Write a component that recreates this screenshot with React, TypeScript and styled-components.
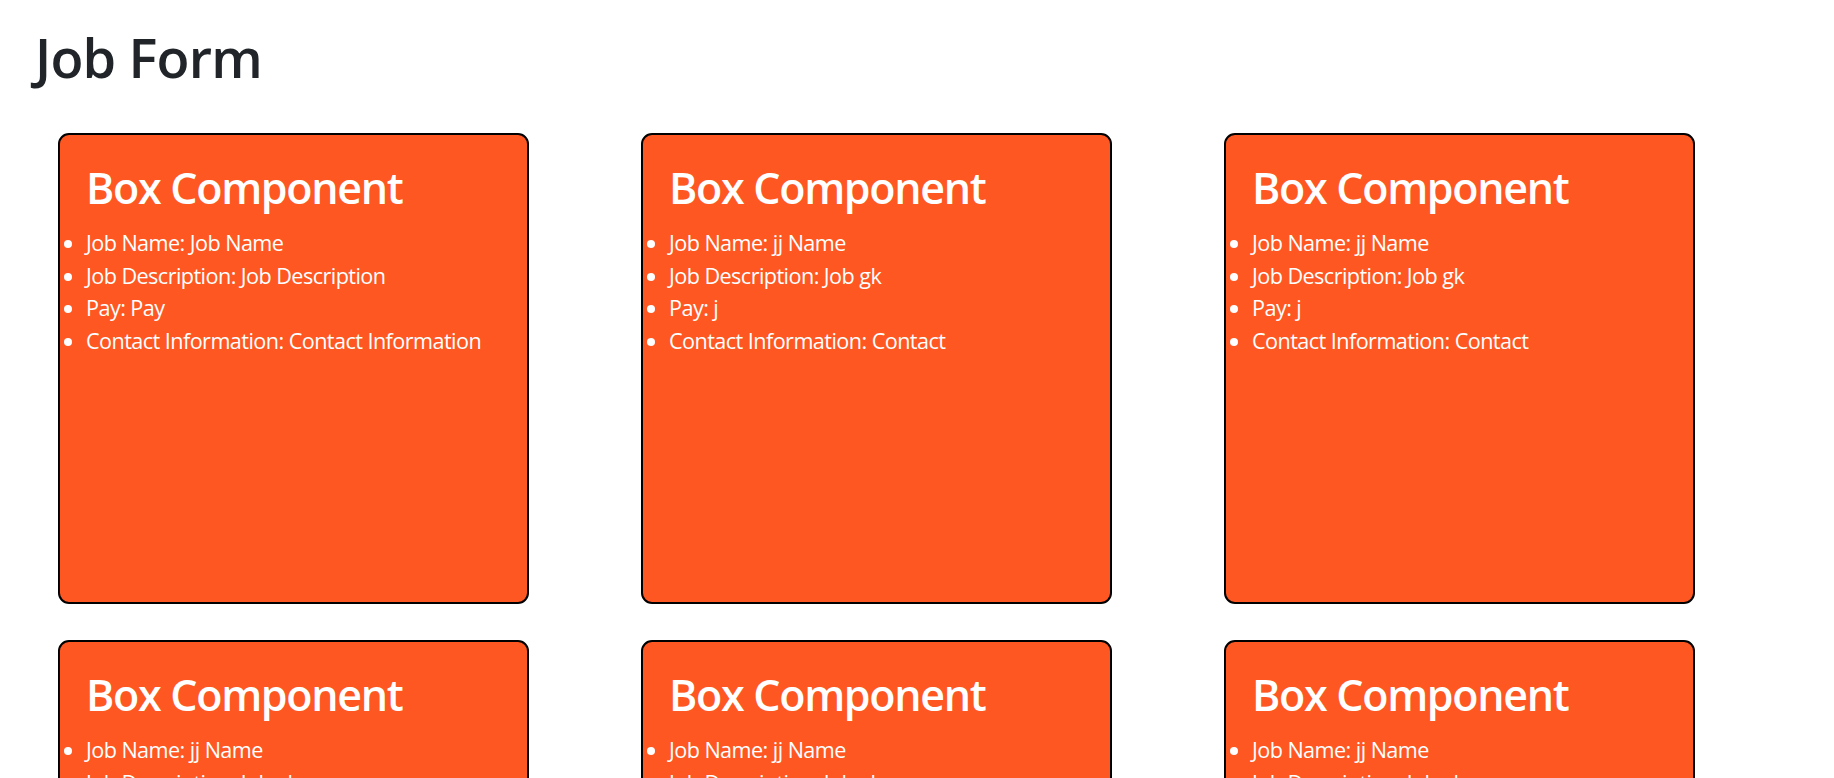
import React from "react";
import styled, { createGlobalStyle } from "styled-components";

const GlobalStyle = createGlobalStyle`
  body {
    margin: 0;
    background: #fff;
    font-family: "Open Sans", "Noto Sans", sans-serif;
    color: #212529;
  }
`;

type Job = {
  id: number;
  name: string;
  description: string;
  pay: string;
  contact: string;
};

const jobs: Job[] = [
  { id: 1, name: "Job Name", description: "Job Description", pay: "Pay", contact: "Contact Information" },
  { id: 2, name: "jj Name", description: "Job gk", pay: "j", contact: "Contact" },
  { id: 3, name: "jj Name", description: "Job gk", pay: "j", contact: "Contact" },
  { id: 4, name: "jj Name", description: "Job gk", pay: "j", contact: "Contact" },
  { id: 5, name: "jj Name", description: "Job gk", pay: "j", contact: "Contact" },
  { id: 6, name: "jj Name", description: "Job gk", pay: "j", contact: "Contact" },
];

const Page = styled.div`
  padding-top: 25px;
`;

const Title = styled.h1`
  margin: 0;
  padding-left: 35px;
  font-size: 54px;
  font-weight: 600;
  letter-spacing: -0.8px;
  line-height: 1.2;
  color: #212529;
`;

const Grid = styled.section`
  display: grid;
  grid-template-columns: repeat(3, 471px);
  column-gap: 112px;
  row-gap: 36px;
  margin-top: 43px;
  padding-left: 58px;
`;

const Card = styled.div`
  box-sizing: border-box;
  width: 471px;
  height: 471px;
  padding-top: 27px;
  background: #ff5722;
  border: 2px solid #000;
  border-radius: 11px;
  color: #fff;
`;

const CardTitle = styled.h2`
  margin: 0 0 14px;
  padding-left: 26px;
  font-size: 43px;
  font-weight: 600;
  letter-spacing: -1.3px;
  line-height: 1.2;
`;

const Details = styled.ul`
  margin: 0;
  padding-left: 26px;
  font-size: 21.6px;
  letter-spacing: -0.55px;
  line-height: 32.4px;
`;

const BoxComponent = ({ job }: { job: Job }) => (
  <Card>
    <CardTitle>Box Component</CardTitle>
    <Details>
      <li>Job Name: {job.name}</li>
      <li>Job Description: {job.description}</li>
      <li>Pay: {job.pay}</li>
      <li>Contact Information: {job.contact}</li>
    </Details>
  </Card>
);

export default function App() {
  return (
    <Page>
      <GlobalStyle />
      <Title>Job Form</Title>
      <Grid>
        {jobs.map((job) => (
          <BoxComponent key={job.id} job={job} />
        ))}
      </Grid>
    </Page>
  );
}
